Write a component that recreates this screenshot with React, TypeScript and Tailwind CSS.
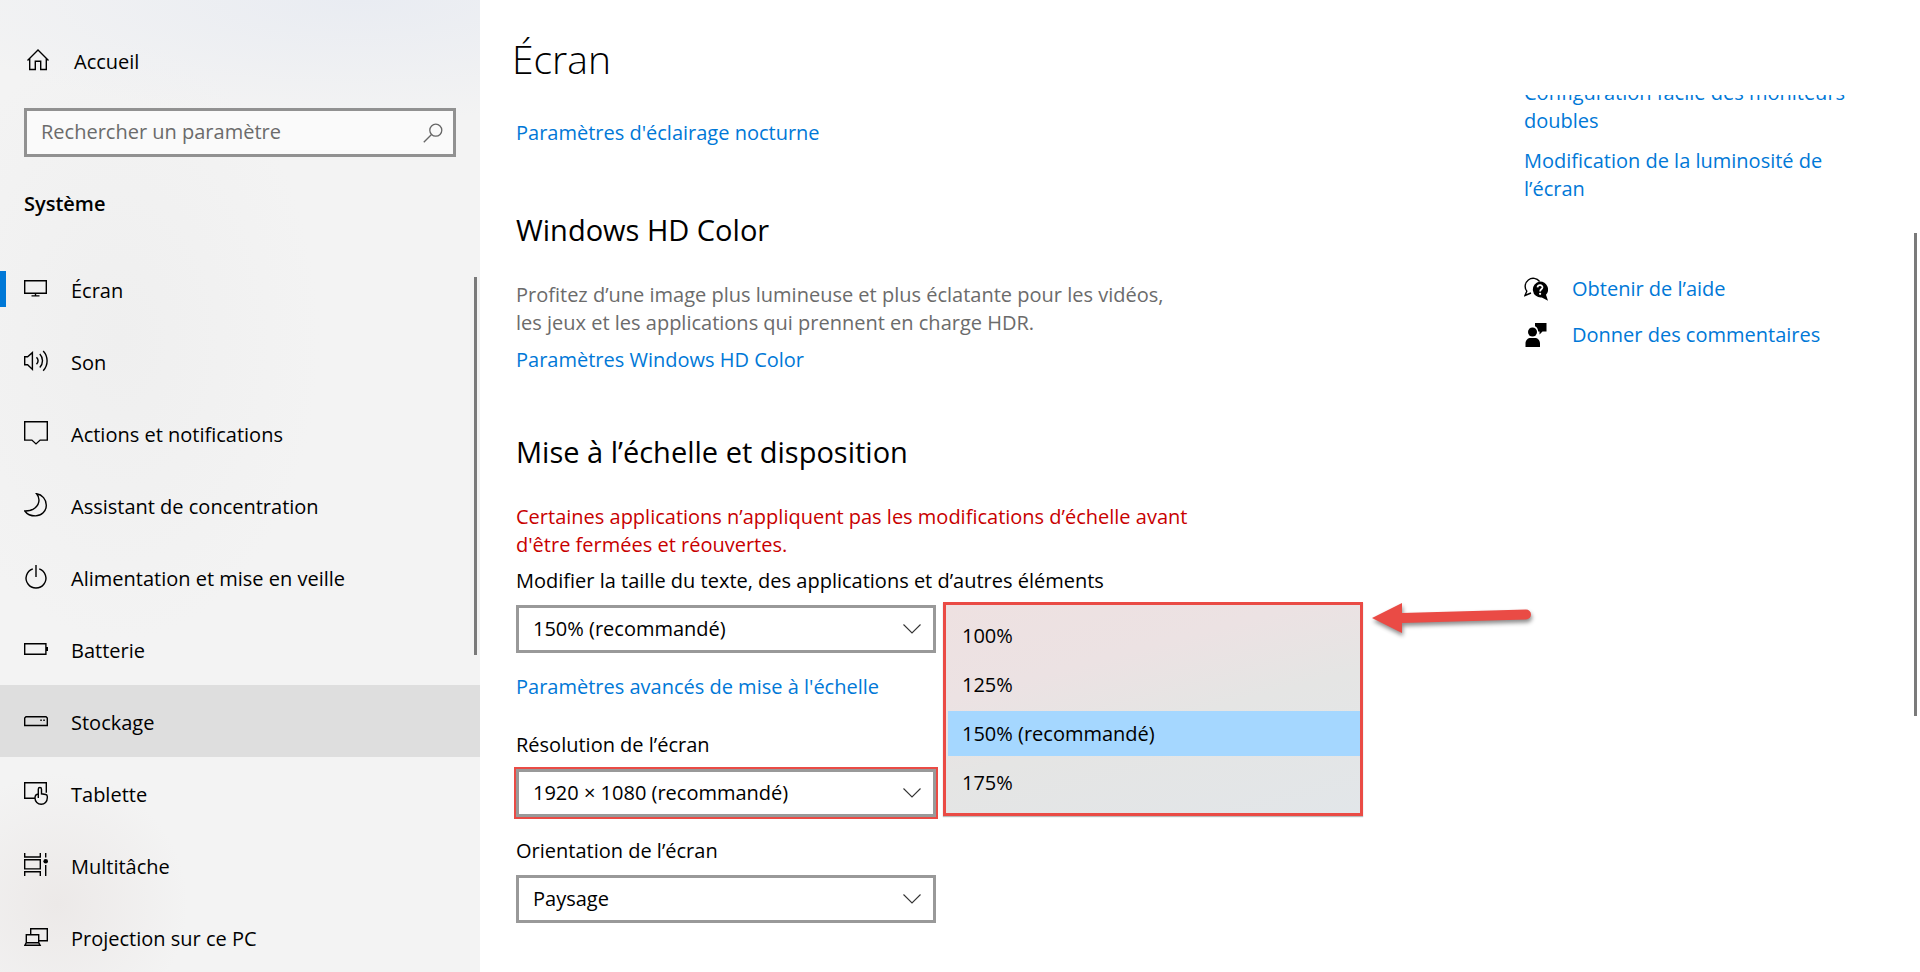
import React, { useState } from 'react';

type IconProps = { children: React.ReactNode };

const Icon: React.FC<IconProps> = ({ children }) => (
  <svg viewBox="0 0 24 24" className="w-6 h-6 shrink-0" fill="none" stroke="currentColor" strokeWidth="1.4" aria-hidden="true">
    {children}
  </svg>
);

const navItems = [
  {
    label: 'Écran',
    icon: (
      <Icon>
        <path d="M.7 3.7h21.6v12.6H.7zM11.5 16.3v2.4M7.5 18.9h8" />
      </Icon>
    ),
  },
  {
    label: 'Son',
    icon: (
      <Icon>
        <path d="M.7 7.8h2.9L8.4 3.6v16.8l-4.8-4.6H.7z" />
        <path d="M12.5 8.3c1.9 2.1 1.9 4.9 0 7M15.8 5.1c3.6 3.8 3.6 9.6 0 13.4M19.2 1.9c5.2 5.5 5.2 14.4 0 19.9" />
      </Icon>
    ),
  },
  {
    label: 'Actions et notifications',
    icon: (
      <Icon>
        <path d="M.7.7h22.6v18.4h-7.2L12 22.9l-4.1-3.8H.7z" />
      </Icon>
    ),
  },
  {
    label: 'Assistant de concentration',
    icon: (
      <Icon>
        <path d="M12.6.8C18.2 1.6 22.3 6.5 22.3 12.2 22.3 18.2 17.5 22.9 11.5 22.9 7 22.9 3 21.2.8 18 9 18.2 15 13.3 15 7 15 4.5 14 2.5 12.6.8z" />
      </Icon>
    ),
  },
  {
    label: 'Alimentation et mise en veille',
    icon: (
      <Icon>
        <path d="M12 0v12M8.8 3.8a9.9 9.9 0 1 0 6.4 0" />
      </Icon>
    ),
  },
  {
    label: 'Batterie',
    icon: (
      <Icon>
        <path d="M.7 6.7h21.2v10.6H.7z" />
        <path d="M23 10v4" strokeWidth="2" />
      </Icon>
    ),
  },
  {
    label: 'Stockage',
    icon: (
      <Icon>
        <path d="M2 7.7h20l1.3 1.3v7.5H.7V9z" />
        <path d="M16.3 11.2h1.5M19.3 11.2h1.5" />
      </Icon>
    ),
  },
  {
    label: 'Tablette',
    icon: (
      <Icon>
        <path d="M11 17.3H.7V1.7h21.6v10" />
        <path d="M14.3 17V8.2c0-2.2 3.2-2.2 3.2 0v4.6l4.2.7c1.1.2 1.6.9 1.6 2v1.3c0 3.8-2.7 6.5-6.1 6.5-3.5 0-6.2-2.7-6.2-6.3 0-2.2 1.2-3.8 3.3-4" />
      </Icon>
    ),
  },
  {
    label: 'Multitâche',
    icon: (
      <Icon>
        <path d="M.7 0v4h15.600V0M.7 6.700h15.600v9.200H.7zM.7 23v-4.300h15.600V23M21.700 0v4.500M21.700 12v11" />
        <circle cx="21.7" cy="8.2" r="2.3" fill="currentColor" stroke="none" />
      </Icon>
    ),
  },
  {
    label: 'Projection sur ce PC',
    icon: (
      <Icon>
        <path d="M6.7 9.5V3.7h16.6v12h-8.6" />
        <path d="M2.3 9.7h12.4v8H2.3zM2.3 17.7.9 20.3h15.2l-1.4-2.6" />
      </Icon>
    ),
  },
];

const scales = ['100%', '125%', '150% (recommandé)', '175%'];

type SelectBoxProps = {
  id: string;
  label: string;
  options: string[];
  value?: string;
  onChange?: (value: string) => void;
  highlighted?: boolean;
  children?: React.ReactNode;
};

const SelectBox: React.FC<SelectBoxProps> = ({ id, label, options, value, onChange, highlighted, children }) => (
  <div>
    <label htmlFor={id} className="block leading-7">
      {label}
    </label>
    <div className="relative w-[420px] mt-[10px]">
      <select
        id={id}
        value={value}
        onChange={(e) => onChange?.(e.target.value)}
        className={`block w-full h-12 pl-[14px] pr-12 bg-white border-[3px] border-[#999999] appearance-none outline-none ${
          highlighted ? 'ring-2 ring-[#ea4b45]' : ''
        }`}
      >
        {options.map((o) => (
          <option key={o}>{o}</option>
        ))}
      </select>
      <svg
        viewBox="0 0 18 10"
        className="absolute right-[15px] top-[19px] w-[18px] h-[10px] pointer-events-none"
        fill="none"
        stroke="#333333"
        strokeWidth="1.1"
        aria-hidden="true"
      >
        <path d="M.5.5 9 9 17.5.5" />
      </svg>
      {children}
    </div>
  </div>
);

const Sidebar: React.FC = () => (
  <aside className="w-1/4 shrink-0 bg-[#f3f3f3] bg-[radial-gradient(ellipse_440px_120px_at_75%_0%,#e9ecf2,transparent),radial-gradient(circle_130px_at_12%_93%,#ece9e8,transparent),radial-gradient(ellipse_200px_300px_at_25%_35%,#efefef,transparent)]">
    <a href="#accueil" className="mt-6 mb-3 h-[72px] pl-[26px] flex items-center gap-6">
      <Icon>
        <path d="M1.500 12.400 12 2l10.500 10.400M3.700 10.500v11h5.600v-8.200h5.400v8.200h5.600v-11" />
      </Icon>
      <span className="pt-[3px]">Accueil</span>
    </a>
    <div className="mx-6 h-[49px] flex items-center border-[3px] border-[#919191] bg-[#fafafa]">
      <input
        type="search"
        aria-label="Rechercher un paramètre"
        placeholder="Rechercher un paramètre"
        className="flex-1 min-w-0 pl-[14px] pb-[2px] bg-transparent outline-none placeholder:text-[#6b6b6b]"
      />
      <button type="button" aria-label="Rechercher" className="mr-[10px]">
        <svg viewBox="0 0 20 20" className="w-5 h-5" fill="none" stroke="#666666" strokeWidth="1.3" aria-hidden="true">
          <circle cx="12.8" cy="7.2" r="6" />
          <path d="M8.5 11.5.8 19.2" />
        </svg>
      </button>
    </div>
    <h2 className="h-24 pl-6 pb-[2px] flex items-center font-semibold">Système</h2>
    <nav className="relative">
      {navItems.map(({ label, icon }) => (
        <a
          key={label}
          href={`#${label}`}
          className={`h-[72px] flex items-center ${label === 'Stockage' ? 'bg-[#dedede]' : ''}`}
        >
          <span className={`w-[6px] h-9 mr-[18px] ${label === 'Écran' ? 'bg-[#0078d7]' : ''}`} />
          {icon}
          <span className="ml-[23px] pt-[3px]">{label}</span>
        </a>
      ))}
      <div className="absolute right-[3px] top-6 w-[3px] h-[378px] bg-[#7a7a7a]" />
    </nav>
  </aside>
);

const ScaleMenu: React.FC<{ value: string; onSelect: (value: string) => void }> = ({ value, onSelect }) => (
  <div className="absolute left-full -top-[3px] ml-[7px] flex items-start">
    <ul
      role="listbox"
      aria-label="Mise à l’échelle"
      className="w-[420px] shrink-0 py-2 flex flex-col gap-1 border-[3px] border-[#ea4b45] bg-[linear-gradient(165deg,#eee1e1_0%,#ece2e3_30%,#e5e5e4_55%,#e2e6e9_100%)] shadow-[0_1px_1px_#bbbbbb]"
    >
      {scales.map((s) => (
        <li key={s} role="option" aria-selected={s === value} className="pl-[2px]">
          <button
            type="button"
            onClick={() => onSelect(s)}
            className={`w-full h-[45px] pl-[14px] text-left ${s === value ? 'bg-[#a5d7ff]' : ''}`}
          >
            {s}
          </button>
        </li>
      ))}
    </ul>
    <svg viewBox="0 0 170 40" className="ml-1 w-[170px] h-10 shrink-0 drop-shadow-[1px_3px_2px_rgba(0,0,0,0.45)]" aria-hidden="true">
      <path d="M5 16 35 1v10l124-3.5a5 5 0 0 1 0 10L35 21v10z" fill="#ea4b45" />
    </svg>
  </div>
);

const DisplaySettings: React.FC = () => {
  const [scale, setScale] = useState('150% (recommandé)');

  return (
    <div className="flex-1 min-w-0">
      <a href="#eclairage" className="block mt-6 leading-7 text-[#0078d7]">
        Paramètres d'éclairage nocturne
      </a>

      <section className="mt-[63px]">
        <h2 className="text-[29px] leading-10">Windows HD Color</h2>
        <p className="mt-[31px] max-w-[670px] leading-7 text-[#6b6b6b]">
          Profitez d’une image plus lumineuse et plus éclatante pour les vidéos, les jeux et les applications qui prennent en charge HDR.
        </p>
        <a href="#hdcolor" className="block mt-[9px] leading-7 text-[#0078d7]">
          Paramètres Windows HD Color
        </a>
      </section>

      <section className="mt-[58px]">
        <h2 className="text-[29px] leading-10">Mise à l’échelle et disposition</h2>
        <p className="mt-[31px] mb-2 max-w-[690px] leading-7 text-[#c80000]">
          Certaines applications n’appliquent pas les modifications d’échelle avant d'être fermées et réouvertes.
        </p>
        <SelectBox
          id="scale"
          label="Modifier la taille du texte, des applications et d’autres éléments"
          options={scales}
          value={scale}
          onChange={setScale}
        >
          <ScaleMenu value={scale} onSelect={setScale} />
        </SelectBox>
        <a href="#avances" className="block mt-5 mb-[30px] leading-7 text-[#0078d7]">
          Paramètres avancés de mise à l'échelle
        </a>
        <SelectBox id="resolution" label="Résolution de l’écran" options={['1920 × 1080 (recommandé)']} highlighted />
        <div className="mt-5">
          <SelectBox id="orientation" label="Orientation de l’écran" options={['Paysage']} />
        </div>
      </section>
    </div>
  );
};

const RelatedLinks: React.FC = () => (
  <aside className="w-[396px] shrink-0 pr-12 text-[#0078d7]">
    <a href="#moniteurs" className="block -mt-4 leading-7">
      Configuration facile des moniteurs doubles
    </a>
    <a href="#luminosite" className="block mt-3 leading-7">
      Modification de la luminosité de l’écran
    </a>
    <a href="#aide" className="mt-[72px] flex items-center gap-6 leading-7">
      <svg viewBox="0 0 24 24" className="w-6 h-6 text-black" aria-hidden="true">
        <path
          d="M7 16 1 18.500l1.800-4.300A7.800 7.800 0 1 1 15.600 4.500"
          fill="none"
          stroke="currentColor"
          strokeWidth="1.4"
        />
        <path d="M16 4.500a8 8 0 0 1 6 13.300l2 5.900-6.200-3.200A8 8 0 1 1 16 4.500z" fill="currentColor" />
        <path d="M13.500 10.300c.3-3 5.200-2.700 5 .1-.2 1.900-2.400 1.900-2.400 4" fill="none" stroke="#fff" strokeWidth="1.7" />
        <circle cx="16.1" cy="16.8" r="1.1" fill="#fff" />
      </svg>
      Obtenir de l’aide
    </a>
    <a href="#commentaires" className="mt-[18px] flex items-center gap-6 leading-7">
      <svg viewBox="0 0 24 24" className="w-6 h-6 text-black" fill="currentColor" aria-hidden="true">
        <circle cx="8.5" cy="9" r="4.5" />
        <path d="M1.500 24v-3.500c0-3.500 2.500-5.500 5-5.500h4.500c2.500 0 5 2 5 5.500V24zM11 0h11.500v8.500h-4l-3 3v-3h-1.300C14 5.700 13 4.200 11 3.200z" />
      </svg>
      Donner des commentaires
    </a>
  </aside>
);

export default function App() {
  return (
    <div className="h-screen flex overflow-hidden bg-white text-black text-[20px] font-['Open_Sans','Noto_Sans',sans-serif]">
      <Sidebar />
      <main className="flex-1 min-w-0 flex flex-col">
        <h1 className="h-[95px] shrink-0 pl-8 pt-8 text-[39px] leading-[54px] font-light">Écran</h1>
        <div className="relative flex-1 min-h-0 pl-9 flex overflow-hidden">
          <DisplaySettings />
          <RelatedLinks />
          <div className="absolute right-[3px] top-[138px] w-[3px] h-[483px] bg-[#7a7a7a]" />
        </div>
      </main>
    </div>
  );
}
